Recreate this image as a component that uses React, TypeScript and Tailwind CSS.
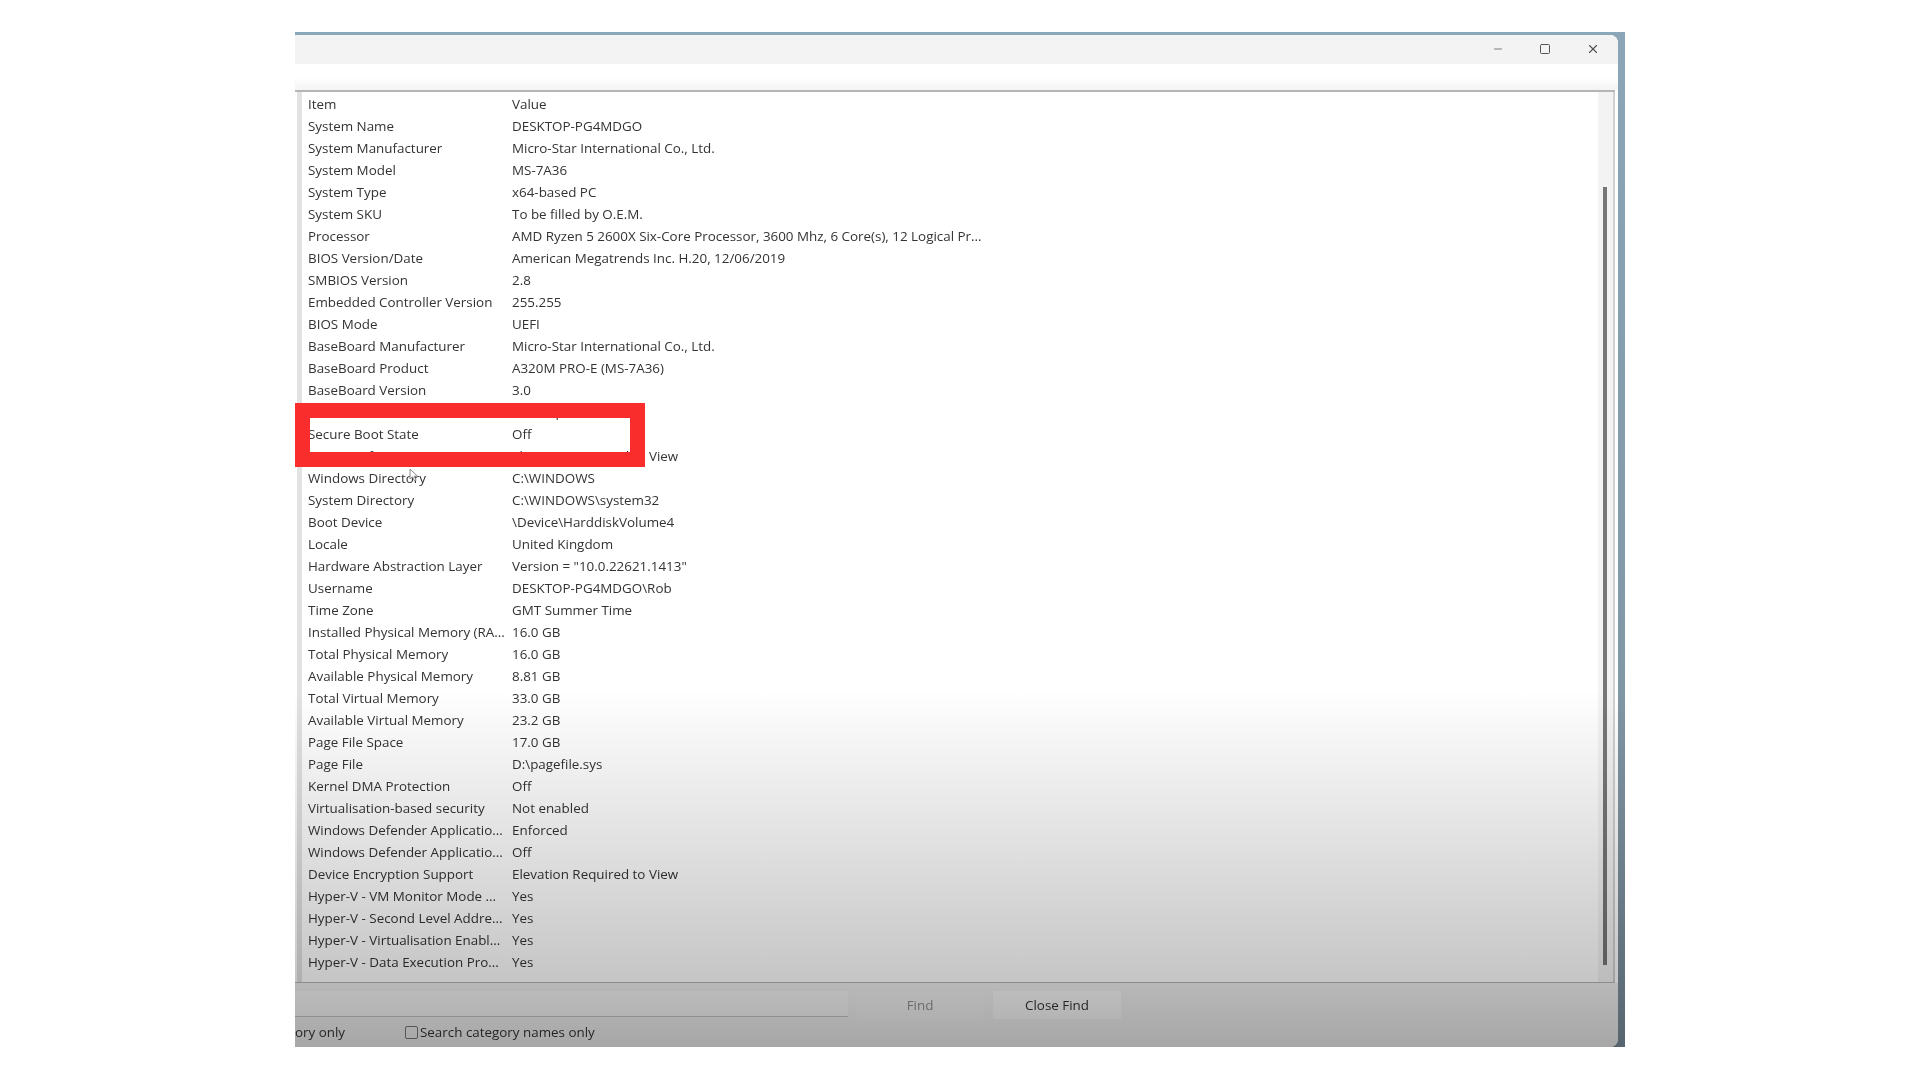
import { Minus, Square, X } from 'lucide-react';

const rows: [string, string][] = [
  ['Item', 'Value'],
  ['System Name', 'DESKTOP-PG4MDGO'],
  ['System Manufacturer', 'Micro-Star International Co., Ltd.'],
  ['System Model', 'MS-7A36'],
  ['System Type', 'x64-based PC'],
  ['System SKU', 'To be filled by O.E.M.'],
  ['Processor', 'AMD Ryzen 5 2600X Six-Core Processor, 3600 Mhz, 6 Core(s), 12 Logical Pr...'],
  ['BIOS Version/Date', 'American Megatrends Inc. H.20, 12/06/2019'],
  ['SMBIOS Version', '2.8'],
  ['Embedded Controller Version', '255.255'],
  ['BIOS Mode', 'UEFI'],
  ['BaseBoard Manufacturer', 'Micro-Star International Co., Ltd.'],
  ['BaseBoard Product', 'A320M PRO-E (MS-7A36)'],
  ['BaseBoard Version', '3.0'],
  ['Platform Role', 'Desktop'],
  ['Secure Boot State', 'Off'],
  ['PCR7 Configuration', 'Elevation Required to View'],
  ['Windows Directory', 'C:\\WINDOWS'],
  ['System Directory', 'C:\\WINDOWS\\system32'],
  ['Boot Device', '\\Device\\HarddiskVolume4'],
  ['Locale', 'United Kingdom'],
  ['Hardware Abstraction Layer', 'Version = "10.0.22621.1413"'],
  ['Username', 'DESKTOP-PG4MDGO\\Rob'],
  ['Time Zone', 'GMT Summer Time'],
  ['Installed Physical Memory (RA...', '16.0 GB'],
  ['Total Physical Memory', '16.0 GB'],
  ['Available Physical Memory', '8.81 GB'],
  ['Total Virtual Memory', '33.0 GB'],
  ['Available Virtual Memory', '23.2 GB'],
  ['Page File Space', '17.0 GB'],
  ['Page File', 'D:\\pagefile.sys'],
  ['Kernel DMA Protection', 'Off'],
  ['Virtualisation-based security', 'Not enabled'],
  ['Windows Defender Applicatio...', 'Enforced'],
  ['Windows Defender Applicatio...', 'Off'],
  ['Device Encryption Support', 'Elevation Required to View'],
  ['Hyper-V - VM Monitor Mode ...', 'Yes'],
  ['Hyper-V - Second Level Addre...', 'Yes'],
  ['Hyper-V - Virtualisation Enabl...', 'Yes'],
  ['Hyper-V - Data Execution Pro...', 'Yes'],
];

export default function App() {
  return (
    <div className="h-[1080px] bg-white pt-[32px] pl-[295px] font-['Open_Sans',sans-serif] text-[#333333] overflow-hidden">
      <div className="relative w-[1330px] h-[1015px] bg-gradient-to-b from-[#8aa6b8] to-[#7b8f9c] pt-[3px] pr-[7px]">
        <div className="flex flex-col h-full bg-white rounded-tr-lg rounded-br-lg overflow-hidden">
          {/* Title bar */}
          <div className="flex h-[29px] shrink-0 items-center justify-end gap-[35px] bg-[#f3f3f3] pr-[18px] pb-[2px] text-[#555555] blur-[0.5px]">
            <Minus size={12} strokeWidth={1.5} />
            <Square size={12} strokeWidth={2} />
            <X size={14} strokeWidth={2} />
          </div>
          <div className="h-[26px] shrink-0 bg-gradient-to-b from-white via-white to-[#f4f4f4]" />

          {/* Item list */}
          <div className="flex h-[893px] shrink-0 border-t-2 border-b border-[#b5b5b5] mr-[3px]">
            <div className="w-[5px] ml-[2px] bg-[#e2e2e2]" />
            <div className="flex-1 pt-[1px] pl-[6px] blur-[0.7px]">
              {rows.map(([item, value], i) => (
                <div key={i} className="grid grid-cols-[204px_1fr] h-[22px] items-center text-[13.4px] leading-[22px] whitespace-nowrap">
                  <span>{item}</span>
                  <span>{value}</span>
                </div>
              ))}
            </div>
            <div className="w-[17px] bg-[#f3f3f3] border-r-2 border-[#d0d0d0] pt-[95px] pl-[5px] pb-[17px]">
              <div className="w-[4px] h-full bg-[#777777] blur-[0.4px]" />
            </div>
          </div>

          {/* Find bar */}
          <div className="flex-1 bg-[#eeeeee] pt-[8px] text-[13.4px]">
            <div className="flex items-start">
              <div className="w-[553px] h-[26px] bg-[#f4f4f4] border-b border-[#c4c4c4] blur-[0.5px]" />
              <div className="flex h-[28px] w-[126px] ml-[9px] items-center justify-center bg-[#f0f0f0] text-[#8f8f8f] blur-[0.5px]">Find</div>
              <div className="flex h-[28px] w-[128px] ml-[10px] items-center justify-center bg-[#f6f6f6] blur-[0.5px]">Close Find</div>
            </div>
            <div className="flex items-center h-[24px] mt-[1px] blur-[0.5px]">
              <span className="w-[110px]">ory only</span>
              <div className="w-[13px] h-[13px] rounded-[2px] border border-[#777777]" />
              <span className="ml-[2px]">Search category names only</span>
            </div>
          </div>
        </div>

        {/* Fade towards the bottom of the frame */}
        <div className="absolute left-0 right-0 bottom-0 h-[357px] bg-gradient-to-b from-transparent via-black/[0.23] via-[83%] to-black/[0.3] pointer-events-none" />

        {/* Mouse pointer */}
        <svg className="absolute left-[114px] top-[436px] blur-[0.5px]" width="10" height="14" viewBox="0 0 10 14" fill="white" stroke="#8a8a8a" strokeWidth="1">
          <path d="M1 1v10l2.5-2.2L5.5 13l1.6-.7L5.2 8.2H8.5z" />
        </svg>

        {/* Highlight box */}
        <div className="absolute left-0 top-[371px] w-[350px] h-[64px] border-[15px] border-[#fa2d2d] pointer-events-none" />
      </div>
    </div>
  );
}
